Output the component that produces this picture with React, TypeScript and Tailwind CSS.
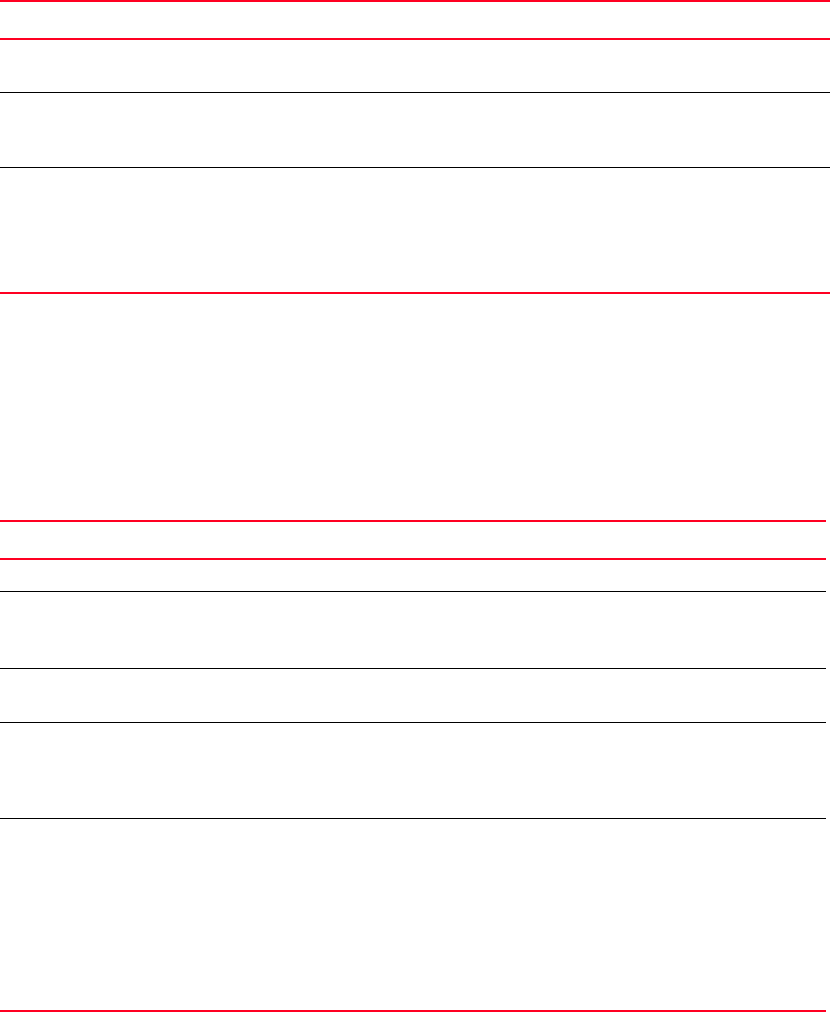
// App.tsx
import React from 'react';

type Row = { h: string; line: 'red' | 'black' };

// rule colours / weights taken from the printed table
const LINE: Record<Row['line'], string> = {
  red: 'border-t-2 border-[#ff0022]',
  black: 'border-t border-black',
};

const TOP_ROWS: Row[] = [
  { h: 'h-[38px]', line: 'red' },
  { h: 'h-[54px]', line: 'red' },
  { h: 'h-[75px]', line: 'black' },
  { h: 'h-[125px]', line: 'black' },
  { h: 'h-[228px]', line: 'red' },
];

const BOTTOM_ROWS: Row[] = [
  { h: 'h-[38px]', line: 'red' },
  { h: 'h-[33px]', line: 'red' },
  { h: 'h-[77px]', line: 'black' },
  { h: 'h-[54px]', line: 'black' },
  { h: 'h-[96px]', line: 'black' },
  { h: 'h-[192px]', line: 'black' },
  { h: 'h-[2px]', line: 'red' },
];

function Table({ rows, className }: { rows: Row[]; className: string }) {
  return (
    <div className={`flex flex-col ${className}`}>
      {rows.map((r, i) => (
        <div key={i} className={`${r.h} ${LINE[r.line]}`} />
      ))}
    </div>
  );
}

export default function App() {
  return (
    <div className="w-[830px] h-[1012px] bg-white overflow-hidden font-['Liberation_Sans',sans-serif]">
      <Table rows={TOP_ROWS} className="w-[830px]" />
      <Table rows={BOTTOM_ROWS} className="w-[826px]" />
    </div>
  );
}
